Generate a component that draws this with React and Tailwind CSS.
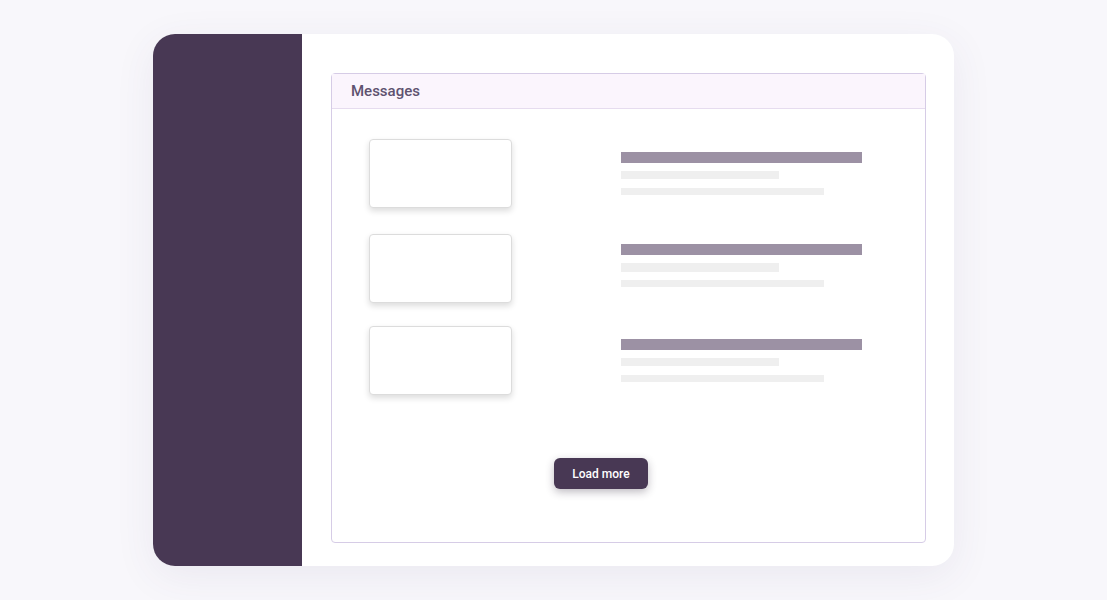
import React from "react";

function Row({ mt, barOffset, gap2, h2 }) {
  return (
    <div className="flex items-start" style={{ marginTop: mt }}>
      <div className="ml-[37px] h-[69px] w-[143px] shrink-0 rounded-[4px] border border-[#dcdcdc] bg-white shadow-[0_3px_6px_rgba(0,0,0,0.14)]" />
      <div className="ml-[109px] flex flex-col" style={{ marginTop: barOffset }}>
        <div className="h-[11px] w-[241px] bg-[#9c91a4]" />
        <div className="mt-[8px] w-[158px] bg-[#efefef]" style={{ height: h2 }} />
        <div className="h-[7px] w-[203px] bg-[#efefef]" style={{ marginTop: gap2 }} />
      </div>
    </div>
  );
}

export default function App() {
  return (
    <div className="flex h-[600px] w-[1107px] items-start bg-[#f8f7fb] font-['Roboto',sans-serif]">
      <div className="ml-[153px] mt-[34px] flex h-[532px] w-[801px] overflow-hidden rounded-[22px] bg-white shadow-[0_10px_40px_rgba(80,60,110,0.08)]">
        <div className="w-[149px] shrink-0 bg-[#483854]" />
        <div className="flex-1 pl-[29px] pr-[28px] pt-[39px] pb-[23px]">
          <div className="flex h-full flex-col rounded-[4px] border border-[#d6cce6]">
            <div className="flex h-[35px] items-center border-b border-[#e6dcef] bg-[#fbf5fd] pl-[19px] text-[15px] font-medium text-[#5e5270]">
              Messages
            </div>
            <Row mt={30} barOffset={13} gap2={9} h2={8} />
            <Row mt={26} barOffset={10} gap2={8} h2={9} />
            <Row mt={23} barOffset={13} gap2={9} h2={8} />
            <div className="ml-[222px] mt-[63px]">
              <button className="h-[31px] w-[94px] rounded-[6px] bg-[#483854] text-[12px] font-medium text-white shadow-[0_3px_8px_rgba(40,30,50,0.3)]">
                Load more
              </button>
            </div>
          </div>
        </div>
      </div>
    </div>
  );
}
